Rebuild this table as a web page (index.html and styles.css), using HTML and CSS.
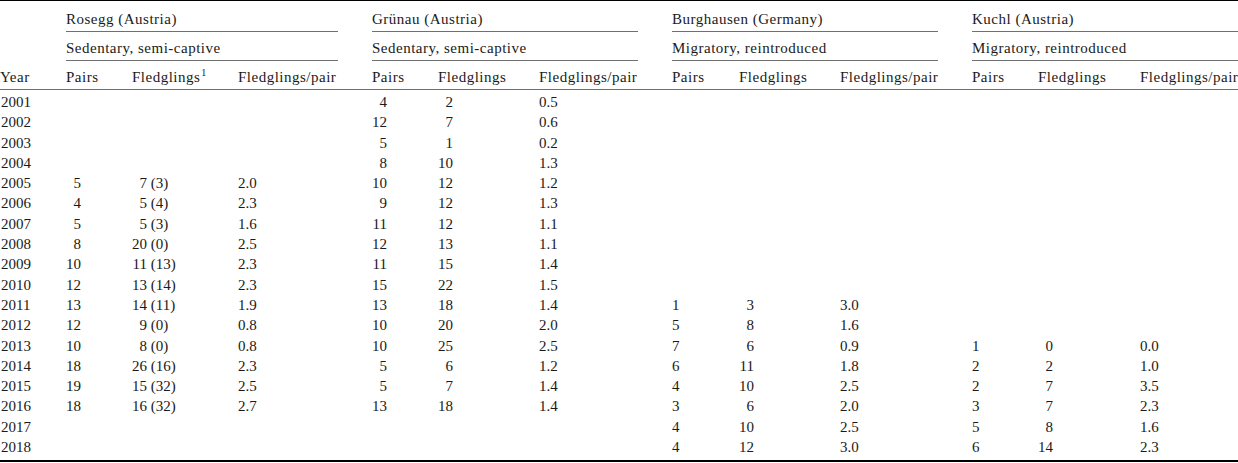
FILE: index.html
```html
<!DOCTYPE html>
<html lang="en">
<head>
<meta charset="utf-8">
<title>Breeding results</title>
<link rel="stylesheet" href="styles.css">
</head>
<body>
<table class="tbl">
  <colgroup>
    <col class="w66">
    <col class="w66"><col class="w106"><col class="w134">
    <col class="w66"><col class="w101"><col class="w133">
    <col class="w67"><col class="w101"><col class="w132">
    <col class="w66"><col class="w102"><col class="w98">
  </colgroup>
  <thead>
    <tr class="r1">
      <th></th>
      <th colspan="3"><span class="grp">Rosegg (Austria)</span></th>
      <th colspan="3"><span class="grp">Grünau (Austria)</span></th>
      <th colspan="3"><span class="grp">Burghausen (Germany)</span></th>
      <th colspan="3"><span class="grp last">Kuchl (Austria)</span></th>
    </tr>
    <tr class="r2">
      <th></th>
      <th colspan="3"><span class="grp">Sedentary, semi-captive</span></th>
      <th colspan="3"><span class="grp">Sedentary, semi-captive</span></th>
      <th colspan="3"><span class="grp">Migratory, reintroduced</span></th>
      <th colspan="3"><span class="grp last">Migratory, reintroduced</span></th>
    </tr>
    <tr class="r3">
      <th class="yr">Year</th>
      <th>Pairs</th><th>Fledglings<sup class="fn">1</sup></th><th>Fledglings/pair</th>
      <th>Pairs</th><th>Fledglings</th><th>Fledglings/pair</th>
      <th>Pairs</th><th>Fledglings</th><th>Fledglings/pair</th>
      <th>Pairs</th><th>Fledglings</th><th>Fledglings/pair</th>
    </tr>
  </thead>
  <tbody>
    <tr><td class="yr">2001</td><td></td><td></td><td></td><td><span class="n">4</span></td><td><span class="n">2</span></td><td>0.5</td><td></td><td></td><td></td><td></td><td></td><td></td></tr>
    <tr><td class="yr">2002</td><td></td><td></td><td></td><td><span class="n">12</span></td><td><span class="n">7</span></td><td>0.6</td><td></td><td></td><td></td><td></td><td></td><td></td></tr>
    <tr><td class="yr">2003</td><td></td><td></td><td></td><td><span class="n">5</span></td><td><span class="n">1</span></td><td>0.2</td><td></td><td></td><td></td><td></td><td></td><td></td></tr>
    <tr><td class="yr">2004</td><td></td><td></td><td></td><td><span class="n">8</span></td><td><span class="n">10</span></td><td>1.3</td><td></td><td></td><td></td><td></td><td></td><td></td></tr>
    <tr><td class="yr">2005</td><td><span class="n">5</span></td><td><span class="n">7</span> (3)</td><td>2.0</td><td><span class="n">10</span></td><td><span class="n">12</span></td><td>1.2</td><td></td><td></td><td></td><td></td><td></td><td></td></tr>
    <tr><td class="yr">2006</td><td><span class="n">4</span></td><td><span class="n">5</span> (4)</td><td>2.3</td><td><span class="n">9</span></td><td><span class="n">12</span></td><td>1.3</td><td></td><td></td><td></td><td></td><td></td><td></td></tr>
    <tr><td class="yr">2007</td><td><span class="n">5</span></td><td><span class="n">5</span> (3)</td><td>1.6</td><td><span class="n">11</span></td><td><span class="n">12</span></td><td>1.1</td><td></td><td></td><td></td><td></td><td></td><td></td></tr>
    <tr><td class="yr">2008</td><td><span class="n">8</span></td><td><span class="n">20</span> (0)</td><td>2.5</td><td><span class="n">12</span></td><td><span class="n">13</span></td><td>1.1</td><td></td><td></td><td></td><td></td><td></td><td></td></tr>
    <tr><td class="yr">2009</td><td><span class="n">10</span></td><td><span class="n">11</span> (13)</td><td>2.3</td><td><span class="n">11</span></td><td><span class="n">15</span></td><td>1.4</td><td></td><td></td><td></td><td></td><td></td><td></td></tr>
    <tr><td class="yr">2010</td><td><span class="n">12</span></td><td><span class="n">13</span> (14)</td><td>2.3</td><td><span class="n">15</span></td><td><span class="n">22</span></td><td>1.5</td><td></td><td></td><td></td><td></td><td></td><td></td></tr>
    <tr><td class="yr">2011</td><td><span class="n">13</span></td><td><span class="n">14</span> (11)</td><td>1.9</td><td><span class="n">13</span></td><td><span class="n">18</span></td><td>1.4</td><td>1</td><td><span class="n">3</span></td><td>3.0</td><td></td><td></td><td></td></tr>
    <tr><td class="yr">2012</td><td><span class="n">12</span></td><td><span class="n">9</span> (0)</td><td>0.8</td><td><span class="n">10</span></td><td><span class="n">20</span></td><td>2.0</td><td>5</td><td><span class="n">8</span></td><td>1.6</td><td></td><td></td><td></td></tr>
    <tr><td class="yr">2013</td><td><span class="n">10</span></td><td><span class="n">8</span> (0)</td><td>0.8</td><td><span class="n">10</span></td><td><span class="n">25</span></td><td>2.5</td><td>7</td><td><span class="n">6</span></td><td>0.9</td><td>1</td><td><span class="n">0</span></td><td>0.0</td></tr>
    <tr><td class="yr">2014</td><td><span class="n">18</span></td><td><span class="n">26</span> (16)</td><td>2.3</td><td><span class="n">5</span></td><td><span class="n">6</span></td><td>1.2</td><td>6</td><td><span class="n">11</span></td><td>1.8</td><td>2</td><td><span class="n">2</span></td><td>1.0</td></tr>
    <tr><td class="yr">2015</td><td><span class="n">19</span></td><td><span class="n">15</span> (32)</td><td>2.5</td><td><span class="n">5</span></td><td><span class="n">7</span></td><td>1.4</td><td>4</td><td><span class="n">10</span></td><td>2.5</td><td>2</td><td><span class="n">7</span></td><td>3.5</td></tr>
    <tr><td class="yr">2016</td><td><span class="n">18</span></td><td><span class="n">16</span> (32)</td><td>2.7</td><td><span class="n">13</span></td><td><span class="n">18</span></td><td>1.4</td><td>3</td><td><span class="n">6</span></td><td>2.0</td><td>3</td><td><span class="n">7</span></td><td>2.3</td></tr>
    <tr><td class="yr">2017</td><td></td><td></td><td></td><td></td><td></td><td></td><td>4</td><td><span class="n">10</span></td><td>2.5</td><td>5</td><td><span class="n">8</span></td><td>1.6</td></tr>
    <tr><td class="yr">2018</td><td></td><td></td><td></td><td></td><td></td><td></td><td>4</td><td><span class="n">12</span></td><td>3.0</td><td>6</td><td><span class="n">14</span></td><td>2.3</td></tr>
  </tbody>
</table>
</body>
</html>
```

FILE: styles.css
```css
html, body {
  margin: 0;
  padding: 0;
  background: #fff;
  overflow: hidden;
}

body {
  font-family: "Liberation Serif", "Times New Roman", serif;
  font-size: 15px;
  color: #1a1a1a;
}

.tbl {
  width: 1238px;
  border-collapse: separate;
  border-spacing: 0;
  table-layout: fixed;
  border-top: 1px solid #000;
  border-bottom: 2px solid #000;
}

.w66 { width: 66px; }
.w67 { width: 67px; }
.w98 { width: 98px; }
.w101 { width: 101px; }
.w102 { width: 102px; }
.w106 { width: 106px; }
.w132 { width: 132px; }
.w133 { width: 133px; }
.w134 { width: 134px; }

.tbl th,
.tbl td {
  padding: 0;
  text-align: left;
  font-weight: normal;
  white-space: nowrap;
  line-height: 20px;
  vertical-align: top;
}

.grp {
  display: block;
  margin-right: 34px;
  border-bottom: 1px solid #707070;
  letter-spacing: 0.5px;
}

.grp.last {
  margin-right: 0;
}

.r1 .grp {
  padding: 8px 0 2px;
}

.r2 .grp {
  padding: 6px 0 2px;
}

.tbl .r3 th {
  padding: 6px 0 2px;
  border-bottom: 1px solid #707070;
  letter-spacing: 0.5px;
}

.fn {
  font-size: 10px;
  line-height: 0;
  vertical-align: 6px;
  letter-spacing: 0;
  margin-left: 1px;
}

.tbl tbody td {
  line-height: 20.3px;
}

.tbl tbody tr:first-child td {
  padding-top: 2px;
}

.tbl tbody tr:last-child td {
  padding-bottom: 3px;
}

.tbl .yr {
  padding-left: 1px;
}

.n {
  display: inline-block;
  width: 15px;
  text-align: right;
}
```
